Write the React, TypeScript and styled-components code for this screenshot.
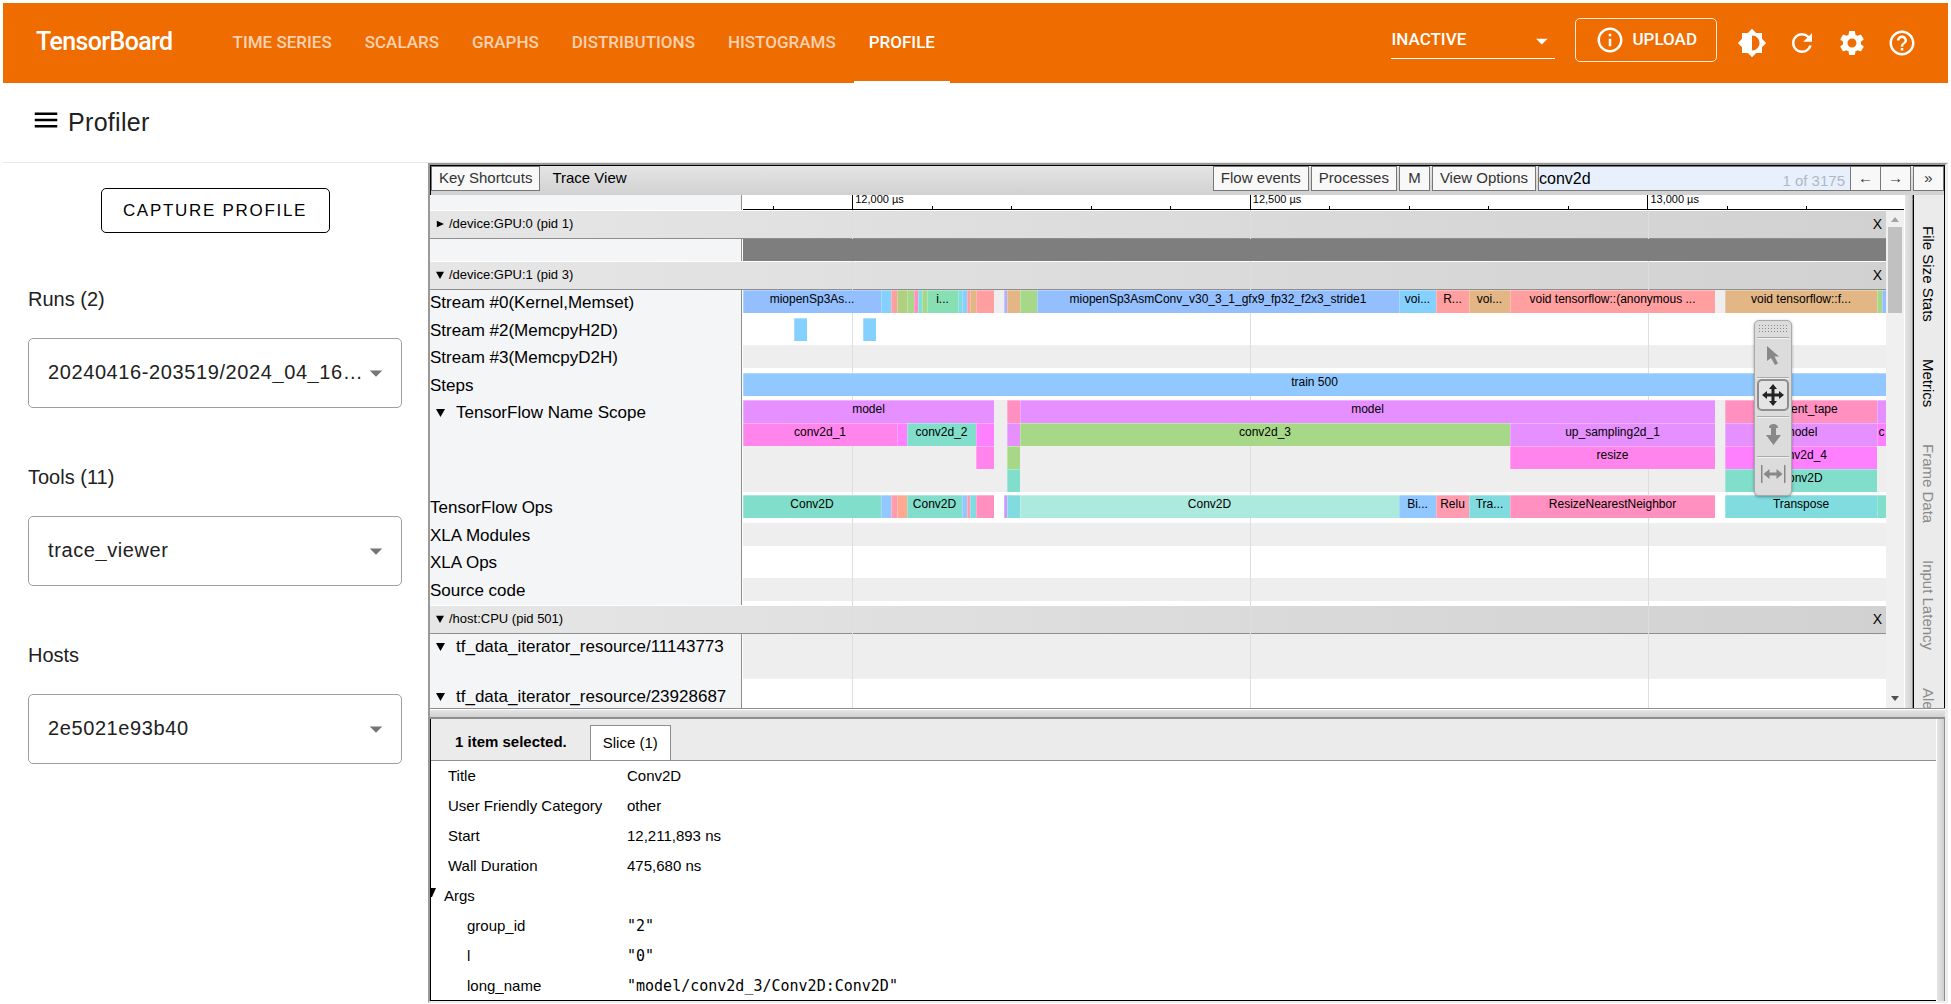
import React from "react";
import styled, { createGlobalStyle, css } from "styled-components";
import {
  MdArrowDropDown,
  MdBrightness6,
  MdHelpOutline,
  MdInfoOutline,
  MdMenu,
  MdRefresh,
  MdSettings,
} from "react-icons/md";

const sans = '"Liberation Sans", Arial, sans-serif';
const roboto = 'Roboto, "Liberation Sans", sans-serif';
const mono = '"DejaVu Sans Mono", monospace';

const GlobalStyle = createGlobalStyle`
  *, *::before, *::after { box-sizing: border-box; }
  body { margin: 0; background: #fff; font-family: ${sans}; color: #000; }
  button, input, select { font: inherit; color: inherit; margin: 0; border-radius: 0; }
`;

/* ---------- page ---------- */

const Page = styled.div`
  display: flex;
  flex-direction: column;
  height: 100vh;
  padding: 3px 3px 1px;
`;

const TopBar = styled.header`
  display: flex;
  align-items: stretch;
  flex: none;
  height: 80px;
  padding: 0 32px 0 33px;
  background: #ef6c00;
  color: #fff;
  font-family: ${roboto};
  font-weight: 500;
`;

const Brand = styled.h1`
  align-self: center;
  margin: 0 45px 2px 0;
  font-size: 25px;
  line-height: 30px;
  font-weight: 500;
  letter-spacing: -0.025em;
`;

const Nav = styled.nav`
  display: flex;
  flex: 1;
  gap: 3px;
`;

const NavLink = styled.a<{ $active?: boolean }>`
  display: flex;
  align-items: center;
  padding: 0 15px;
  border-bottom: 2px solid ${(p) => (p.$active ? "#fff" : "transparent")};
  color: ${(p) => (p.$active ? "#fff" : "rgba(255, 255, 255, 0.7)")};
  font-size: 17px;
  text-decoration: none;
`;

const Actions = styled.div`
  display: flex;
  align-items: center;
  gap: 20px;
`;

const StatusBox = styled.div`
  display: flex;
  align-items: center;
  width: 164px;
  height: 36px;
  margin-bottom: 4px;
  border-bottom: 1px solid #fff;
  svg { margin-left: -26px; pointer-events: none; }
`;

const StatusSelect = styled.select`
  appearance: none;
  width: 100%;
  padding: 0 0 4px;
  border: 0;
  background: transparent;
  color: #fff;
  font-size: 17px;
  option { color: #000; }
`;

const UploadButton = styled.button`
  display: flex;
  align-items: center;
  gap: 7px;
  height: 44px;
  margin-bottom: 6px;
  padding: 0 19px;
  border: 1px solid rgba(255, 255, 255, 0.85);
  border-radius: 5px;
  background: transparent;
  font-size: 17px;
`;

const UploadText = styled.span`
  padding-bottom: 2px;
`;

const IconRow = styled.div`
  display: flex;
`;

const IconButton = styled.button`
  display: flex;
  align-items: center;
  justify-content: center;
  width: 50px;
  height: 50px;
  padding: 0;
  border: 0;
  background: transparent;
  &:first-child { margin-left: -10px; }
  &:last-child { margin-right: -11px; }
`;

const TitleBar = styled.div`
  display: flex;
  align-items: center;
  flex: none;
  gap: 7px;
  height: 80px;
  padding: 0 28px;
  border-bottom: 1px solid #e8e8e8;
`;

const MenuButton = styled.button`
  display: flex;
  padding: 0 0 5px;
  border: 0;
  background: transparent;
`;

const Title = styled.h2`
  margin: 0 0 2px;
  color: #212121;
  font-size: 25px;
  line-height: 32px;
  font-weight: 400;
  letter-spacing: 0.0125em;
`;

const Body = styled.main`
  display: flex;
  flex: 1;
  min-height: 0;
`;

/* ---------- sidebar ---------- */

const Sidebar = styled.aside`
  display: flex;
  flex-direction: column;
  flex: none;
  width: 425px;
  padding: 25px 26px 25px 25px;
`;

const CaptureButton = styled.button`
  align-self: center;
  width: 229px;
  height: 45px;
  margin-bottom: 54px;
  padding: 0;
  border: 1px solid #000;
  border-radius: 5px;
  background: #fff;
  font-size: 17px;
  letter-spacing: 0.1em;
`;

const Field = styled.div`
  margin-bottom: 57px;
`;

const FieldLabel = styled.label`
  display: block;
  margin-bottom: 27px;
  color: #212121;
  font-size: 20px;
  line-height: 24px;
`;

const SelectBox = styled.div`
  display: flex;
  align-items: center;
  height: 70px;
  border: 1px solid #9e9e9e;
  border-radius: 5px;
  color: #757575;
  svg { flex: none; margin-left: -40px; pointer-events: none; }
`;

const FieldSelect = styled.select`
  appearance: none;
  width: 100%;
  height: 100%;
  padding: 0 32px 2px 19px;
  border: 0;
  background: transparent;
  color: #212121;
  font-size: 20px;
  letter-spacing: 0.03em;
`;

/* ---------- viewer ---------- */

const Viewer = styled.section`
  display: flex;
  flex-direction: column;
  flex: 1;
  min-width: 0;
  border: 2px solid #999;
  border-right: 3px solid #eee;
  border-bottom-color: #eee;
`;

const Toolbar = styled.div`
  display: flex;
  align-items: flex-start;
  flex: none;
  gap: 2px;
  height: 30px;
  border: 1px solid #000;
  border-bottom: 0;
  background: linear-gradient(#e5e5e5, #d1d1d1);
  font-size: 15px;
`;

const ToolButton = styled.button<{ $square?: boolean }>`
  flex: none;
  ${(p) => p.$square && "width: 31px;"}
  height: 25px;
  padding: 0 ${(p) => (p.$square ? 0 : 7)}px 2px;
  border: 1px solid #777;
  background: #f8f8f8;
  color: #333;
  font-size: 15px;
  line-height: 21px;
`;

const ViewTitle = styled.span`
  flex: 1;
  padding-left: 10px;
  line-height: 24px;
`;

const Search = styled.div`
  display: flex;
  align-items: center;
  flex: none;
  width: 373px;
  height: 25px;
`;

const SearchBox = styled.label`
  display: flex;
  flex: 1;
  min-width: 0;
  height: 25px;
  border: 1px solid #777;
  background: #e8f0fe;
`;

const SearchInput = styled.input`
  flex: 1;
  min-width: 0;
  padding: 0;
  border: 0;
  outline: 0;
  background: transparent;
  font-size: 16px;
`;

const SearchCount = styled.span`
  padding: 4px 5px 0 0;
  color: #b0b7c3;
  line-height: 20px;
`;

const StepButton = styled(ToolButton)`
  margin-left: -1px;
`;

const Upper = styled.div`
  display: flex;
  flex: 1;
  min-height: 0;
  border-bottom: 1px solid #8e8e8e;
`;

const Timeline = styled.div`
  position: relative;
  display: flex;
  flex-direction: column;
  flex: 1;
  min-width: 0;
`;

const LabelCell = styled.div`
  display: flex;
  align-items: flex-start;
  flex: none;
  width: 312px;
  margin-right: 1px;
  border-right: 1px solid #8e8e8e;
  background: #f3f5f7;
  font-size: 17px;
  line-height: 26px;
  white-space: nowrap;
`;

const RulerRow = styled.div`
  display: flex;
  flex: none;
  height: 15px;
`;

const Ruler = styled.div`
  display: flex;
  align-items: flex-end;
  flex: 1;
  min-width: 0;
  padding-right: 18px;
  border-bottom: 1px solid #000;
`;

const Tick = styled.div<{ $major?: boolean; $lead?: boolean }>`
  flex: ${(p) => (p.$lead ? 29 : 80)} 0 0;
  min-width: 0;
  height: ${(p) => (p.$major ? 14 : 3)}px;
  padding-left: 2px;
  border-left: ${(p) => (p.$lead ? 0 : 1)}px solid #000;
  font-size: 11px;
  line-height: 9px;
  white-space: nowrap;
`;

const ScrollArea = styled.div`
  display: flex;
  flex: 1;
  min-height: 0;
`;

const Tracks = styled.div`
  position: relative;
  flex: 1;
  min-width: 0;
  overflow: hidden;
`;

const GridLines = styled.div`
  position: absolute;
  top: 0;
  right: 0;
  bottom: 0;
  left: 313px;
  z-index: 1;
  display: flex;
  pointer-events: none;
`;

const GridSpan = styled.div<{ $span: number; $first?: boolean }>`
  flex: ${(p) => p.$span} 0 0;
  border-left: ${(p) => (p.$first ? 0 : 1)}px solid #dedede;
`;

const ProcessBar = styled.div`
  display: flex;
  align-items: center;
  gap: 5px;
  height: 29px;
  padding: 0 4px 2px 6px;
  border-top: 1px solid #fff;
  border-bottom: 1px solid #8e8e8e;
  background: linear-gradient(to right, #e6e6e6, #d1d1d1);
  font-size: 13px;
`;

const ProcessName = styled.span`
  flex: 1;
`;

const CloseButton = styled.button`
  padding: 0;
  border: 0;
  background: transparent;
  font-size: 14px;
`;

const Row = styled.div<{ $height: number }>`
  display: flex;
  height: ${(p) => p.$height}px;
`;

const Summary = styled.div`
  position: relative;
  z-index: 2;
  flex: 1;
  background: #7e7e7e;
`;

const Disclosure = styled.span`
  display: flex;
  align-items: center;
  width: 26px;
  height: 25px;
  padding-left: 6px;
`;

const Lanes = styled.div<{ $bg: string; $height: number }>`
  flex: 1;
  min-width: 0;
  height: ${(p) => p.$height}px;
  background: ${(p) => p.$bg};
`;

const Lane = styled.div`
  display: flex;
  height: 23px;
`;

const Slice = styled.div<{ $span: number; $color?: string }>`
  flex: ${(p) => p.$span} 0 0;
  min-width: 0;
  overflow: hidden;
  font-size: 12px;
  line-height: 18px;
  text-align: center;
  white-space: nowrap;
  ${(p) =>
    p.$color &&
    css`
      position: relative;
      z-index: 2;
      background: ${p.$color};
      box-shadow: inset 0 1px rgba(255, 255, 255, 0.3), inset 1px 0 rgba(255, 255, 255, 0.25);
    `}
`;

const ScrollTrack = styled.div`
  display: flex;
  flex-direction: column;
  align-items: center;
  flex: none;
  width: 18px;
  padding: 7px 0;
  background: #f0f0f0;
`;

const ScrollThumb = styled.div`
  width: 14px;
  height: 86px;
  margin: 5px 0 auto;
  background: #c1c1c1;
`;

const VerticalHandle = styled.div`
  flex: none;
  width: 9px;
  border-left: 1px solid #fff;
  border-right: 1px solid #8e8e8e;
  background: linear-gradient(to right, #e5e5e5, #d1d1d1);
`;

const HorizontalHandle = styled.div`
  flex: none;
  height: 10px;
  border-top: 1px solid #fff;
  border-bottom: 2px solid #8e8e8e;
  background: linear-gradient(#e5e5e5, #d1d1d1);
`;

const SideTabs = styled.div`
  display: flex;
  flex-direction: column;
  flex: none;
  width: 32px;
  padding-top: 12px;
  overflow: hidden;
  border: solid #000;
  border-width: 0 1px;
  background: #ebebeb;
`;

const SideTab = styled.button<{ $enabled?: boolean }>`
  flex: none;
  width: 30px;
  padding: 19px 2px 18px 0;
  border: 0;
  background: transparent;
  color: ${(p) => (p.$enabled ? "#000" : "#8a8a8a")};
  font-size: 15px;
  line-height: 28px;
  writing-mode: vertical-rl;
  white-space: nowrap;
`;

const ModePanel = styled.div`
  position: absolute;
  top: 125px;
  right: 112px;
  z-index: 3;
  display: flex;
  flex-direction: column;
  width: 38px;
  height: 176px;
  border: 1px solid #aaa;
  border-radius: 5px;
  background: #dcdcdc;
  box-shadow: 0 1px 3px rgba(0, 0, 0, 0.35);
`;

const Grip = styled.div`
  flex: none;
  height: 9px;
  margin: 3px 3px 4px;
  background: radial-gradient(circle, #888 0 1px, transparent 1px) 0 0 / 3px 3px;
`;

const ModeSlot = styled.div`
  display: flex;
  align-items: center;
  justify-content: center;
  flex: 1;
  margin: 0 2px;
  padding-bottom: 4px;
  border-top: 1px solid #aaa;
  box-shadow: inset 0 1px #f2f2f2;
`;

const ModeButton = styled.button<{ $on?: boolean }>`
  display: flex;
  align-items: center;
  justify-content: center;
  flex: none;
  width: 32px;
  height: 32px;
  padding: 0;
  border: ${(p) => (p.$on ? "2px solid #8e8e8e" : "0")};
  border-radius: 5px;
  background: ${(p) => (p.$on ? "#e4e4e4" : "transparent")};
  color: ${(p) => (p.$on ? "#222" : "#888")};
  svg { flex: none; }
`;

/* ---------- details ---------- */

const Lower = styled.div`
  display: flex;
  flex: none;
  height: 282px;
`;

const Details = styled.div`
  display: flex;
  flex-direction: column;
  flex: 1;
  min-width: 0;
  overflow: hidden;
  border-left: 1px solid #000;
  border-bottom: 1px solid #000;
  font-size: 15px;
`;

const DetailTabs = styled.div`
  display: flex;
  align-items: flex-end;
  flex: none;
  gap: 23px;
  height: 42px;
  padding-left: 24px;
  border-bottom: 1px solid #8e8e8e;
  background: #ebebeb;
`;

const Selected = styled.strong`
  line-height: 36px;
`;

const DetailTab = styled.button`
  height: 35px;
  padding: 0 12px 2px;
  border: 1px solid #8e8e8e;
  border-bottom: 0;
  background: #fff;
  font-size: 15px;
`;

const DetailTable = styled.table`
  border-collapse: collapse;
  width: 100%;
  line-height: 30px;
  text-align: left;
`;

const KeyCell = styled.th<{ $nested?: boolean }>`
  width: 196px;
  height: 30px;
  padding: 0 0 0 ${(p) => (p.$nested ? 36 : 17)}px;
  font-weight: 400;
`;

const ValueCell = styled.td<{ $mono?: boolean }>`
  height: 30px;
  padding: 0;
  font-family: ${(p) => (p.$mono ? mono : sans)};
`;

const ArgsCell = styled.th`
  height: 30px;
  padding: 0;
  font-weight: 400;
`;

const ArgsToggle = styled.button`
  display: flex;
  gap: 7px;
  height: 30px;
  padding: 0;
  border: 0;
  background: transparent;
  line-height: 30px;
  svg { margin-top: 7px; }
`;

/* ---------- data ---------- */

type SliceData = [start: number, end: number, color: string, label?: string];

const T_START = 743;
const T_END = 1886;

const C = {
  blue: "#94bfff",
  sky: "#84d0ff",
  step: "#90c8ff",
  coral: "#ff9f9f",
  rose: "#ff9cb0",
  pink: "#ff90bf",
  hot: "#ff84ec",
  magenta: "#ff80ff",
  violet: "#e690ff",
  green: "#a6d888",
  olive: "#b0d080",
  mint: "#88dfb4",
  teal: "#80decb",
  paleTeal: "#aceadd",
  aqua: "#80dcdf",
  tan: "#e2b685",
  peach: "#ffaa90",
  lilac: "#cc98ff",
};

const stream0: SliceData[] = [
  [743, 881, C.blue, "miopenSp3As..."],
  [881, 891, C.sky],
  [891, 897, C.coral],
  [897, 907, C.olive],
  [907, 914, C.green],
  [914, 918, C.pink],
  [918, 922, C.aqua],
  [922, 927, C.green],
  [927, 958, C.mint, "i..."],
  [958, 962, C.aqua],
  [962, 967, C.sky],
  [967, 970, C.coral],
  [970, 976, C.tan],
  [976, 994, C.coral],
  [1004, 1007, "#b0b0ff"],
  [1007, 1020, C.tan],
  [1020, 1037, C.green],
  [1037, 1399, C.blue, "miopenSp3AsmConv_v30_3_1_gfx9_fp32_f2x3_stride1"],
  [1399, 1436, C.sky, "voi..."],
  [1436, 1469, C.coral, "R..."],
  [1469, 1510, C.tan, "voi..."],
  [1510, 1715, C.coral, "void tensorflow::(anonymous ..."],
  [1725, 1877, C.tan, "void tensorflow::f..."],
  [1877, 1882, C.green],
  [1882, 1886, C.blue],
];

const scope: SliceData[][] = [
  [
    [743, 994, C.violet, "model"],
    [1007, 1020, C.pink],
    [1020, 1715, C.violet, "model"],
    [1725, 1877, C.pink, "gradient_tape"],
    [1877, 1886, C.violet],
  ],
  [
    [743, 897, C.hot, "conv2d_1"],
    [897, 907, C.magenta],
    [907, 976, C.teal, "conv2d_2"],
    [976, 994, C.magenta],
    [1007, 1020, C.violet],
    [1020, 1510, C.green, "conv2d_3"],
    [1510, 1715, C.violet, "up_sampling2d_1"],
    [1725, 1877, C.violet, "model"],
    [1877, 1886, C.magenta, "c"],
  ],
  [
    [976, 994, C.hot],
    [1007, 1020, C.green],
    [1510, 1715, C.hot, "resize"],
    [1725, 1877, C.magenta, "conv2d_4"],
  ],
  [
    [1007, 1020, C.teal],
    [1725, 1877, C.teal, "Conv2D"],
  ],
];

const ops: SliceData[] = [
  [743, 881, C.teal, "Conv2D"],
  [881, 891, C.step],
  [891, 897, C.rose],
  [897, 907, C.peach],
  [907, 962, C.teal, "Conv2D"],
  [962, 967, C.step],
  [967, 970, C.rose],
  [970, 976, C.aqua],
  [976, 994, C.pink],
  [1004, 1007, C.lilac],
  [1007, 1020, C.aqua],
  [1020, 1399, C.paleTeal, "Conv2D"],
  [1399, 1436, C.step, "Bi..."],
  [1436, 1469, C.rose, "Relu"],
  [1469, 1510, C.aqua, "Tra..."],
  [1510, 1715, C.pink, "ResizeNearestNeighbor"],
  [1725, 1877, C.aqua, "Transpose"],
  [1877, 1886, C.teal],
];

type Track = {
  name: string;
  height: number;
  bg: string;
  bgHeight?: number;
  open?: boolean;
  lanes?: SliceData[][];
};

const gpuTracks: Track[] = [
  { name: "Stream #0(Kernel,Memset)", height: 28, bg: "#eee", lanes: [stream0] },
  {
    name: "Stream #2(MemcpyH2D)",
    height: 27,
    bg: "#fff",
    lanes: [[[794, 807, C.sky], [863, 876, C.sky]]],
  },
  { name: "Stream #3(MemcpyD2H)", height: 28, bg: "#eee" },
  { name: "Steps", height: 27, bg: "#fff", lanes: [[[743, 1886, C.step, "train 500"]]] },
  { name: "TensorFlow Name Scope", height: 95, bg: "#eee", bgHeight: 92, open: true, lanes: scope },
  { name: "TensorFlow Ops", height: 28, bg: "#fff", lanes: [ops] },
  { name: "XLA Modules", height: 27, bg: "#eee" },
  { name: "XLA Ops", height: 28, bg: "#fff" },
  { name: "Source code", height: 27, bg: "#eee" },
];

const cpuTracks: Track[] = [
  { name: "tf_data_iterator_resource/11143773", height: 50, bg: "#eee", bgHeight: 45, open: true },
  { name: "tf_data_iterator_resource/23928687", height: 50, bg: "#fff", open: true },
];

/* ---------- parts ---------- */

const Arrow = ({ right = false, size = 9 }: { right?: boolean; size?: number }) => (
  <svg width={size} height={size} viewBox="0 0 10 10" aria-hidden="true">
    <path d={right ? "M1 1 10 5 1 9z" : "M0 1h10L5 10z"} fill="#000" />
  </svg>
);

const LaneView = ({ slices }: { slices: SliceData[] }) => {
  const cells: React.ReactNode[] = [];
  let cursor = T_START;
  slices.forEach(([start, end, color, label]) => {
    if (start > cursor) cells.push(<Slice key={`gap${cursor}`} $span={start - cursor} />);
    cells.push(
      <Slice key={start} $span={end - start} $color={color}>
        {label}
      </Slice>
    );
    cursor = end;
  });
  if (cursor < T_END) cells.push(<Slice key="end" $span={T_END - cursor} />);
  return <Lane>{cells}</Lane>;
};

const TrackRow = ({ track }: { track: Track }) => (
  <Row $height={track.height}>
    <LabelCell>
      {track.open && (
        <Disclosure>
          <Arrow />
        </Disclosure>
      )}
      {track.name}
    </LabelCell>
    <Lanes $bg={track.bg} $height={track.bgHeight ?? 23}>
      {track.lanes?.map((lane, i) => (
        <LaneView key={i} slices={lane} />
      ))}
    </Lanes>
  </Row>
);

const Process = ({ name, collapsed }: { name: string; collapsed?: boolean }) => (
  <ProcessBar>
    <Arrow right={collapsed} size={8} />
    <ProcessName>{name}</ProcessName>
    <CloseButton>X</CloseButton>
  </ProcessBar>
);

const SelectField = ({ id, label, value }: { id: string; label: string; value: string }) => (
  <Field>
    <FieldLabel htmlFor={id}>{label}</FieldLabel>
    <SelectBox>
      <FieldSelect id={id}>
        <option>{value}</option>
      </FieldSelect>
      <MdArrowDropDown size={30} />
    </SelectBox>
  </Field>
);

const ModeIcon = ({ d }: { d: string }) => (
  <svg width="26" height="24" viewBox="0 0 26 24" fill="currentColor" aria-hidden="true">
    <path d={d} />
  </svg>
);

const modes = [
  { name: "Selection", d: "M7 3v15l4-3 4 7 3-1.500-3.500-7H19z" },
  {
    name: "Pan",
    on: true,
    d: "M13 1l4 5h-2.500v4.500H19V8l5 4-5 4v-2.500h-4.500V18H17l-4 5-4-5h2.500v-4.500H7V16l-5-4 5-4v2.500h4.500V6H9z",
  },
  { name: "Zoom", d: "M9 6c0-3 2-4 4.500-4S18 3 18 6h-2v7h5l-7.500 10L6 13h5V6z" },
  {
    name: "Timing",
    d: "M1 3h1.500v18H1zM24 3h1.500v18H24zM3.500 12 9.500 7v3.500h7V7l6 5-6 5v-3.500h-7V17z",
  },
];

const majorTicks: Record<number, string> = { 1: "12,000 µs", 6: "12,500 µs", 11: "13,000 µs" };

const tabs = ["TIME SERIES", "SCALARS", "GRAPHS", "DISTRIBUTIONS", "HISTOGRAMS", "PROFILE"];

const details = [
  ["Title", "Conv2D"],
  ["User Friendly Category", "other"],
  ["Start", "12,211,893 ns"],
  ["Wall Duration", "475,680 ns"],
];

const args = [
  ["group_id", '"2"'],
  ["l", '"0"'],
  ["long_name", '"model/conv2d_3/Conv2D:Conv2D"'],
];

export default function App() {
  return (
    <Page>
      <GlobalStyle />
      <TopBar>
        <Brand>TensorBoard</Brand>
        <Nav>
          {tabs.map((tab) => (
            <NavLink key={tab} href="#" $active={tab === "PROFILE"}>
              {tab}
            </NavLink>
          ))}
        </Nav>
        <Actions>
          <StatusBox>
            <StatusSelect aria-label="Inactive dashboards">
              <option>INACTIVE</option>
            </StatusSelect>
            <MdArrowDropDown size={28} />
          </StatusBox>
          <UploadButton>
            <MdInfoOutline size={30} />
            <UploadText>UPLOAD</UploadText>
          </UploadButton>
          <IconRow>
            <IconButton aria-label="Theme">
              <MdBrightness6 size={30} />
            </IconButton>
            <IconButton aria-label="Reload">
              <MdRefresh size={30} />
            </IconButton>
            <IconButton aria-label="Settings">
              <MdSettings size={30} />
            </IconButton>
            <IconButton aria-label="Help">
              <MdHelpOutline size={30} />
            </IconButton>
          </IconRow>
        </Actions>
      </TopBar>

      <TitleBar>
        <MenuButton aria-label="Menu">
          <MdMenu size={30} />
        </MenuButton>
        <Title>Profiler</Title>
      </TitleBar>

      <Body>
        <Sidebar>
          <CaptureButton>CAPTURE PROFILE</CaptureButton>
          <SelectField id="runs" label="Runs (2)" value="20240416-203519/2024_04_16…" />
          <SelectField id="tools" label="Tools (11)" value="trace_viewer" />
          <SelectField id="hosts" label="Hosts" value="2e5021e93b40" />
        </Sidebar>

        <Viewer>
          <Toolbar>
            <ToolButton>Key Shortcuts</ToolButton>
            <ViewTitle>Trace View</ViewTitle>
            <ToolButton>Flow events</ToolButton>
            <ToolButton>Processes</ToolButton>
            <ToolButton $square>M</ToolButton>
            <ToolButton>View Options</ToolButton>
            <Search>
              <SearchBox>
                <SearchInput aria-label="Search" defaultValue="conv2d" />
                <SearchCount>1 of 3175</SearchCount>
              </SearchBox>
              <StepButton $square>←</StepButton>
              <StepButton $square>→</StepButton>
            </Search>
            <ToolButton $square>»</ToolButton>
          </Toolbar>

          <Upper>
            <Timeline>
              <RulerRow>
                <LabelCell />
                <Ruler>
                  <Tick $lead />
                  {Array.from({ length: 14 }, (_, i) => (
                    <Tick key={i} $major={i in majorTicks}>
                      {majorTicks[i]}
                    </Tick>
                  ))}
                </Ruler>
              </RulerRow>
              <ScrollArea>
                <Tracks>
                  <GridLines>
                    <GridSpan $span={109} $first />
                    <GridSpan $span={398} />
                    <GridSpan $span={398} />
                    <GridSpan $span={238} />
                  </GridLines>
                  <Process name="/device:GPU:0 (pid 1)" collapsed />
                  <Row $height={22}>
                    <LabelCell />
                    <Summary />
                  </Row>
                  <Process name="/device:GPU:1 (pid 3)" />
                  {gpuTracks.map((t) => (
                    <TrackRow key={t.name} track={t} />
                  ))}
                  <Process name="/host:CPU (pid 501)" />
                  {cpuTracks.map((t) => (
                    <TrackRow key={t.name} track={t} />
                  ))}
                </Tracks>
                <ScrollTrack>
                  <svg width="8" height="5" viewBox="0 0 8 5" aria-hidden="true">
                    <path d="M0 5 4 0l4 5z" fill="#a3a3a3" />
                  </svg>
                  <ScrollThumb />
                  <svg width="8" height="5" viewBox="0 0 8 5" aria-hidden="true">
                    <path d="M0 0h8L4 5z" fill="#505050" />
                  </svg>
                </ScrollTrack>
              </ScrollArea>
              <ModePanel>
                <Grip />
                {modes.map((mode) => (
                  <ModeSlot key={mode.name}>
                    <ModeButton $on={mode.on} aria-label={mode.name}>
                      <ModeIcon d={mode.d} />
                    </ModeButton>
                  </ModeSlot>
                ))}
              </ModePanel>
            </Timeline>
            <VerticalHandle />
            <SideTabs>
              <SideTab $enabled>File Size Stats</SideTab>
              <SideTab $enabled>Metrics</SideTab>
              <SideTab>Frame Data</SideTab>
              <SideTab>Input Latency</SideTab>
              <SideTab>Alerts</SideTab>
            </SideTabs>
          </Upper>

          <HorizontalHandle />

          <Lower>
            <Details>
              <DetailTabs>
                <Selected>1 item selected.</Selected>
                <DetailTab>Slice (1)</DetailTab>
              </DetailTabs>
              <DetailTable>
                <tbody>
                  {details.map(([key, value]) => (
                    <tr key={key}>
                      <KeyCell scope="row">{key}</KeyCell>
                      <ValueCell>{value}</ValueCell>
                    </tr>
                  ))}
                  <tr>
                    <ArgsCell scope="rowgroup" colSpan={2}>
                      <ArgsToggle>
                        <svg width="6" height="9" viewBox="0 0 6 9" aria-hidden="true">
                          <path d="M0 0h5L1 9H0z" />
                        </svg>
                        Args
                      </ArgsToggle>
                    </ArgsCell>
                  </tr>
                  {args.map(([key, value]) => (
                    <tr key={key}>
                      <KeyCell scope="row" $nested>
                        {key}
                      </KeyCell>
                      <ValueCell $mono>{value}</ValueCell>
                    </tr>
                  ))}
                </tbody>
              </DetailTable>
            </Details>
            <VerticalHandle />
          </Lower>
        </Viewer>
      </Body>
    </Page>
  );
}
